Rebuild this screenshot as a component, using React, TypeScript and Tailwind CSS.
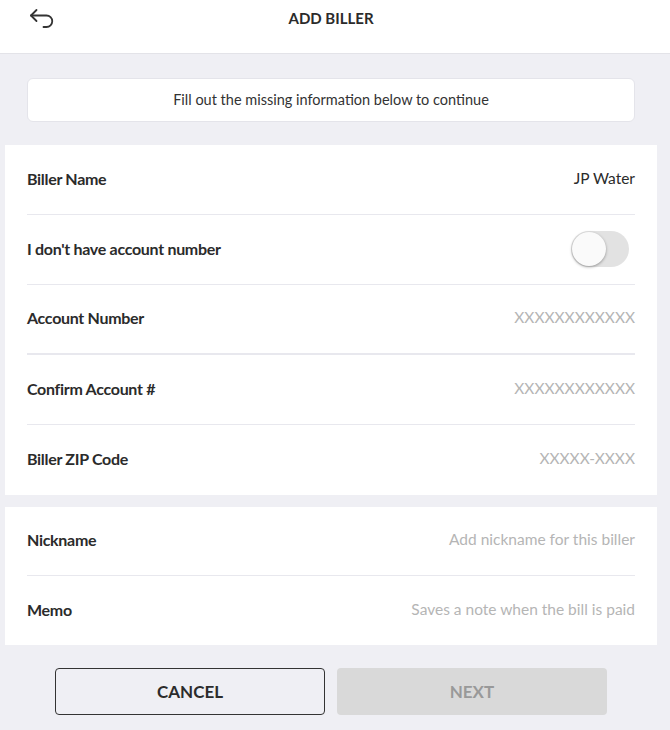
type Row = {
  label: string;
  value?: string;
  placeholder?: boolean;
  toggle?: boolean;
  thick?: boolean;
};

const billerRows: Row[] = [
  { label: 'Biller Name', value: 'JP Water' },
  { label: "I don't have account number", toggle: true },
  { label: 'Account Number', value: 'XXXXXXXXXXXX', placeholder: true, thick: true },
  { label: 'Confirm Account #', value: 'XXXXXXXXXXXX', placeholder: true },
  { label: 'Biller ZIP Code', value: 'XXXXX-XXXX', placeholder: true },
];

const extraRows: Row[] = [
  { label: 'Nickname', value: 'Add nickname for this biller', placeholder: true },
  { label: 'Memo', value: 'Saves a note when the bill is paid', placeholder: true },
];

function BackIcon() {
  return (
    <svg width="26" height="20" viewBox="0 0 26 20" fill="none" stroke="#333" strokeWidth="1.8" strokeLinecap="round" strokeLinejoin="round">
      <path d="M7.5 2 L2 7.5 L7.5 13" />
      <path d="M2 7.5 H17.5 a5.75 5.75 0 0 1 0 11.5 H14.5" />
    </svg>
  );
}

function FormRow({ row, last, h }: { row: Row; last: boolean; h: string }) {
  const border = last ? '' : row.thick ? 'border-b-2 border-[#e8e8ee]' : 'border-b border-[#e8e8ee]';
  return (
    <div className={`flex ${h} items-center justify-between pb-[2px] ${border}`}>
      <span className="text-[16px] font-bold tracking-[-0.3px] text-[#2b2b2b]">{row.label}</span>
      {row.toggle ? (
        <div className="mr-[6px] flex h-[36px] w-[58px] items-center rounded-full bg-[#e2e2e2] pl-[1px]">
          <div className="h-[34px] w-[34px] rounded-full bg-[#fafafa] shadow-[0_1px_3px_rgba(0,0,0,0.35)]" />
        </div>
      ) : (
        <span
          className={
            row.placeholder
              ? 'text-[15.5px] text-[#b5b5b5]'
              : 'text-[15.5px] text-[#2b2b2b]'
          }
        >
          {row.value}
        </span>
      )}
    </div>
  );
}

export default function App() {
  return (
    <div className="min-h-[730px] w-full bg-[#efeff4] font-['Lato','Noto_Sans',sans-serif]">
      {/* Header */}
      <header className="h-[54px] border-b border-[#e3e3e8] bg-white">
        <div className="relative flex w-[662px] justify-center pt-[7px]">
          <button className="absolute left-[29px] top-[8px]">
            <BackIcon />
          </button>
          <h1 className="text-[15px] font-bold text-[#2b2b2b]">ADD BILLER</h1>
        </div>
      </header>

      <main className="w-[662px] px-[5px]">
        {/* Notice */}
        <div className="mx-[22px] mt-[24px] flex h-[44px] items-center justify-center rounded-[6px] border border-[#e4e4ea] bg-white text-[14.5px] text-[#333]">
          Fill out the missing information below to continue
        </div>

        {/* Biller info */}
        <section className="mt-[23px] bg-white px-[22px]">
          {billerRows.map((row, i) => (
            <FormRow key={row.label} row={row} h="h-[70px]" last={i === billerRows.length - 1} />
          ))}
        </section>

        {/* Optional */}
        <section className="mt-[12px] bg-white px-[22px]">
          {extraRows.map((row, i) => (
            <FormRow key={row.label} row={row} h="h-[69px]" last={i === extraRows.length - 1} />
          ))}
        </section>

        {/* Actions */}
        <div className="mt-[23px] flex justify-center gap-[12px]">
          <button className="h-[47px] w-[270px] rounded-[4px] border border-[#333] text-[17px] font-bold text-[#2b2b2b]">
            CANCEL
          </button>
          <button className="h-[47px] w-[270px] rounded-[4px] bg-[#d9d9d9] text-[17px] font-bold text-[#999]">
            NEXT
          </button>
        </div>
      </main>
    </div>
  );
}
